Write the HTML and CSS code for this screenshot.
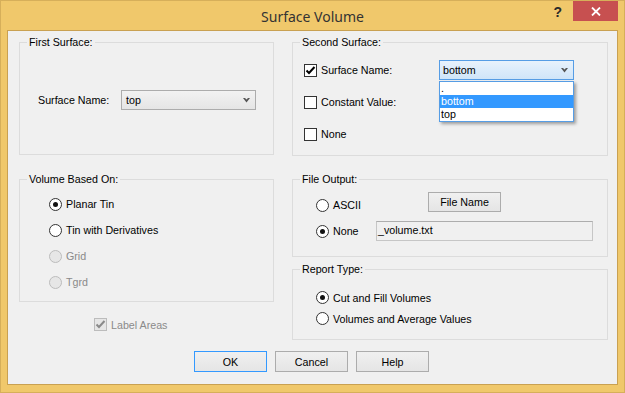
FILE: index.html
```html
<!DOCTYPE html>
<html lang="en">
<head>
    <meta charset="UTF-8">
    <title>Surface Volume</title>
    <link rel="stylesheet" href="styles.css">
</head>
<body>

<div class="window">

    <!-- Title bar -->
    <div class="titlebar">
        <span></span>
        <h1 class="title">Surface Volume</h1>
        <div class="caption">
            <span class="help">?</span>
            <span class="close">
                <svg width="10" height="9" viewBox="0 0 10 9"><path d="M1 0.5 L9 8.5 M9 0.5 L1 8.5" stroke="#fff" stroke-width="1.8"/></svg>
            </span>
        </div>
    </div>

    <!-- Dialog body -->
    <div class="client">
        <div class="columns">

            <!-- Left column -->
            <div class="col">
                <fieldset class="group group-first">
                    <legend>First Surface:</legend>
                    <div class="row-first">
                        <span class="field-label">Surface Name:</span>
                        <div class="combo">
                            <span>top</span>
                            <svg class="arrow" width="7" height="5" viewBox="0 0 7 5"><path d="M0 0 H2 L3.5 1.6 L5 0 H7 L3.5 4.5 Z" fill="#555"/></svg>
                        </div>
                    </div>
                </fieldset>

                <fieldset class="group group-volume">
                    <legend>Volume Based On:</legend>
                    <div class="group-body">
                        <div class="opt-row"><span class="radio checked"></span>Planar Tin</div>
                        <div class="opt-row"><span class="radio"></span>Tin with Derivatives</div>
                        <div class="opt-row disabled"><span class="radio"></span>Grid</div>
                        <div class="opt-row disabled"><span class="radio"></span>Tgrd</div>
                    </div>
                </fieldset>

                <div class="label-areas disabled">
                    <span class="check checked">
                        <svg width="11" height="11" viewBox="0 0 11 11"><path d="M1.5 5.5 L4 8 L9.5 2" fill="none" stroke="#8a8a8a" stroke-width="2"/></svg>
                    </span>Label Areas
                </div>
            </div>

            <!-- Right column -->
            <div class="col">
                <fieldset class="group group-second">
                    <legend>Second Surface:</legend>
                    <div class="group-body">
                        <div class="check-row">
                            <span class="check-label">
                                <span class="check checked">
                                    <svg width="11" height="11" viewBox="0 0 11 11"><path d="M1.5 5.5 L4 8 L9.5 2" fill="none" stroke="#000" stroke-width="2"/></svg>
                                </span>Surface Name:
                            </span>
                            <div class="combo combo-open">
                                <span>bottom</span>
                                <svg class="arrow" width="7" height="5" viewBox="0 0 7 5"><path d="M0 0 H2 L3.5 1.6 L5 0 H7 L3.5 4.5 Z" fill="#555"/></svg>
                                <ul class="drop-list">
                                    <li>.</li>
                                    <li class="selected">bottom</li>
                                    <li>top</li>
                                </ul>
                            </div>
                        </div>
                        <div class="check-row">
                            <span class="check-label"><span class="check"></span>Constant Value:</span>
                        </div>
                        <div class="check-row">
                            <span class="check-label"><span class="check"></span>None</span>
                        </div>
                    </div>
                </fieldset>

                <fieldset class="group group-file">
                    <legend>File Output:</legend>
                    <div class="group-body">
                        <div class="file-row">
                            <span class="radio-label ascii"><span class="radio"></span>ASCII</span>
                            <button class="btn btn-file">File Name</button>
                        </div>
                        <div class="file-row file-row-2">
                            <span class="radio-label"><span class="radio checked"></span>None</span>
                            <div class="textbox">_volume.txt</div>
                        </div>
                    </div>
                </fieldset>

                <fieldset class="group group-report">
                    <legend>Report Type:</legend>
                    <div class="group-body">
                        <div class="report-row"><span class="radio checked"></span>Cut and Fill Volumes</div>
                        <div class="report-row"><span class="radio"></span>Volumes and Average Values</div>
                    </div>
                </fieldset>
            </div>
        </div>

        <!-- Buttons -->
        <div class="buttons">
            <button class="btn btn-default">OK</button>
            <button class="btn">Cancel</button>
            <button class="btn">Help</button>
        </div>
    </div>
</div>

</body>
</html>
```

FILE: styles.css
```css
* {
    margin: 0;
    padding: 0;
    box-sizing: border-box;
}

body {
    width: 625px;
    height: 393px;
    overflow: hidden;
    font-family: "Liberation Sans", Arial, sans-serif;
    font-size: 10.7px;
    color: #000;
}

/* Window frame */
.window {
    width: 625px;
    height: 393px;
    background-color: #f0c86b;
    border: 1px solid #d6af5a;
    padding: 0 6px 7px;
    display: flex;
    flex-direction: column;
}

.titlebar {
    height: 29px;
    display: grid;
    grid-template-columns: 1fr auto 1fr;
}

.title {
    font-family: "Noto Sans", "Open Sans", sans-serif;
    font-weight: normal;
    font-size: 14px;
    line-height: 31px;
    color: #333;
}

.caption {
    justify-self: end;
    display: flex;
    align-items: flex-start;
}

.help {
    font-family: "Liberation Sans", Arial, sans-serif;
    font-weight: bold;
    font-size: 14px;
    line-height: 22px;
    color: #2a2a2a;
    margin-right: 11px;
}

.close {
    width: 45px;
    height: 20px;
    background-color: #c75050;
    display: flex;
    align-items: center;
    justify-content: center;
}

.client {
    flex: 1;
    background-color: #f0f0f0;
    border: 1px solid #c9a152;
}

.columns {
    display: grid;
    grid-template-columns: 255px 316px;
    column-gap: 18px;
    align-items: start;
    padding: 5px 0 0 11px;
}

.col {
    display: flex;
    flex-direction: column;
}

/* Group boxes */
.group {
    margin: 0;
    padding: 0;
    min-width: 0;
    border: 1px solid #dcdcdc;
}

.group legend {
    margin-left: 7px;
    padding: 0 2px;
    line-height: 13px;
}

.group-first { height: 119px; }
.group-volume { height: 129px; margin-top: 18px; }
.group-second { height: 120px; }
.group-file { height: 84px; margin-top: 17px; }
.group-report { height: 77px; margin-top: 6px; }

.group-volume .group-body { padding: 5px 0 0 29px; }
.group-second .group-body { padding: 5px 0 0 11px; }
.group-file .group-body { padding: 6px 0 0 23px; }
.group-report .group-body { padding: 11px 0 0 23px; }

.row-first {
    display: flex;
    align-items: center;
    margin-top: 41px;
    padding-left: 18px;
}

.field-label {
    width: 83px;
}

/* Combo boxes */
.combo {
    position: relative;
    width: 135px;
    height: 20px;
    border: 1px solid #acacac;
    background: linear-gradient(#f2f2f2, #e5e5e5);
    display: flex;
    align-items: center;
    justify-content: space-between;
    padding: 0 5px 0 4px;
}

.combo-open {
    border-color: #569de5;
    background: linear-gradient(#e8f2fc, #cfe5f9);
    padding-left: 3px;
}

.drop-list {
    position: absolute;
    top: 20px;
    left: -1px;
    width: 135px;
    list-style: none;
    background-color: #fff;
    border: 1px solid #569de5;
    box-shadow: 2px 2px 3px rgba(0, 0, 0, 0.35);
    z-index: 2;
}

.drop-list li {
    height: 13px;
    line-height: 13px;
    padding-left: 1px;
}

.drop-list .selected {
    background-color: #3399ff;
    color: #fff;
}

/* Check boxes and radios */
.check {
    width: 13px;
    height: 13px;
    border: 1px solid #333;
    background-color: #fff;
    display: inline-flex;
    align-items: center;
    justify-content: center;
    margin-right: 4px;
    flex-shrink: 0;
}

.radio {
    width: 13px;
    height: 13px;
    border: 1px solid #333;
    border-radius: 50%;
    background-color: #fff;
    display: inline-flex;
    align-items: center;
    justify-content: center;
    margin-right: 4px;
    flex-shrink: 0;
}

.radio.checked::after {
    content: "";
    width: 5px;
    height: 5px;
    border-radius: 50%;
    background-color: #111;
}

.disabled {
    color: #8a8a8a;
}

.disabled .radio,
.disabled .check {
    border-color: #bcbcbc;
    background-color: #e6e6e6;
}

.check-row {
    height: 32px;
    display: flex;
    align-items: center;
}

.check-label {
    width: 135px;
    display: flex;
    align-items: center;
}

.opt-row {
    height: 26px;
    display: flex;
    align-items: center;
}

.label-areas {
    display: flex;
    align-items: center;
    margin: 16px 0 0 75px;
}

.file-row {
    height: 20px;
    display: flex;
    align-items: center;
}

.file-row-2 {
    margin-top: 9px;
}

.radio-label {
    width: 60px;
    display: flex;
    align-items: center;
}

.radio-label.ascii {
    margin-top: 6px;
}

.textbox {
    width: 217px;
    height: 20px;
    border: 1px solid #c6c6c6;
    border-top-color: #adadad;
    line-height: 17px;
    padding-left: 1px;
}

.report-row {
    height: 21px;
    display: flex;
    align-items: center;
}

/* Push buttons */
.btn {
    width: 73px;
    height: 21px;
    font-family: "Liberation Sans", Arial, sans-serif;
    font-size: 10.7px;
    color: #000;
    border: 1px solid #acacac;
    background: linear-gradient(#f0f0f0, #e5e5e5);
}

.btn-file {
    height: 20px;
    margin-left: 52px;
}

.btn-default {
    border-color: #3399ff;
}

.buttons {
    display: flex;
    justify-content: center;
    gap: 8px;
    margin-top: 11px;
    padding-right: 2px;
}
```
